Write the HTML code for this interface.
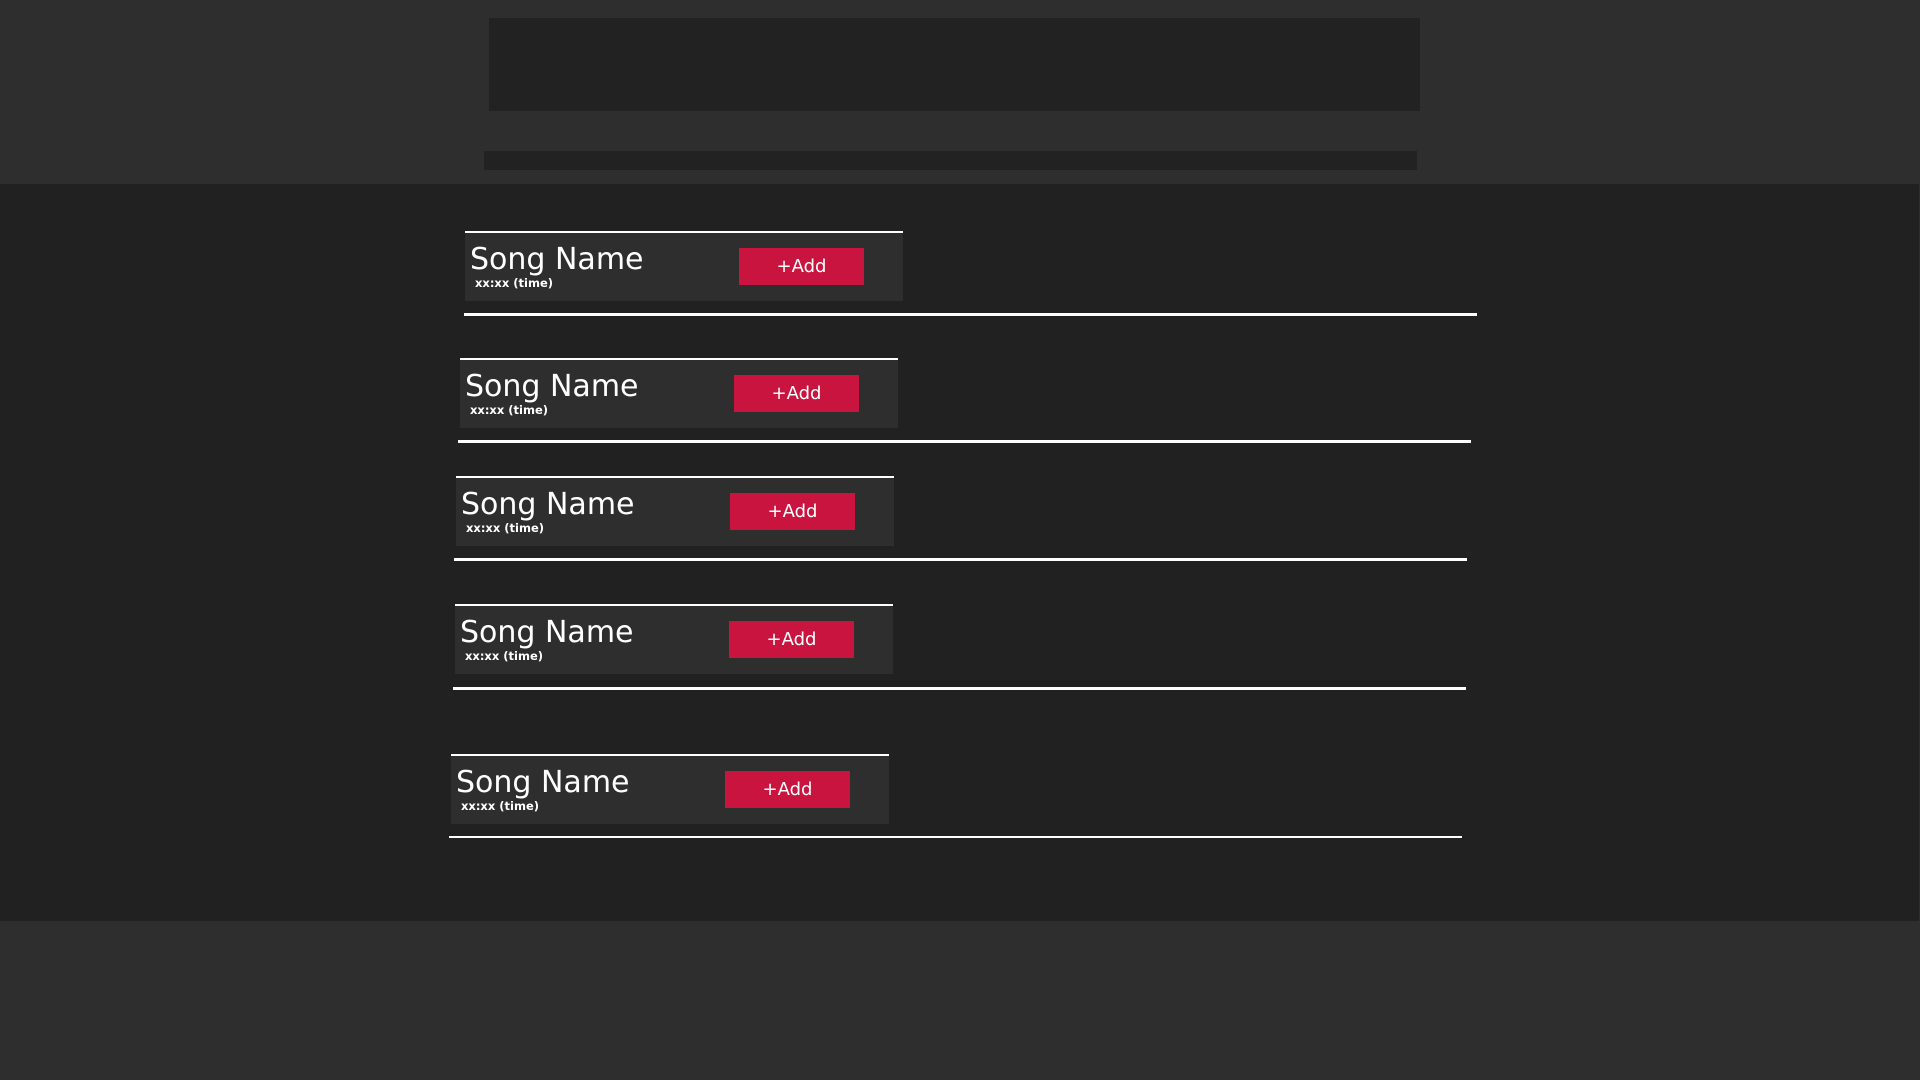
<!DOCTYPE html>
<html><head><meta charset="utf-8"><style>
html,body{margin:0;padding:0;width:1920px;height:1080px;overflow:hidden;background:#2e2e2e;font-family:"DejaVu Sans","Liberation Sans",sans-serif;}
.abs{position:absolute}
.main{left:0;top:184px;width:1919px;height:737px;background:#212121}
.box{position:absolute;width:438px;height:68px;background:#2e2e2e;border-top:2px solid #fff}
.title{position:absolute;left:5px;top:10px;color:#fff;font-size:30px;line-height:34px;white-space:nowrap}
.time{position:absolute;left:10px;top:43px;color:#fff;font-size:11.5px;font-weight:bold;line-height:14px;white-space:nowrap}
.btn{position:absolute;left:274px;top:15px;width:125px;height:37px;background:#c8143f;color:#fff;font-size:18px;line-height:37px;text-align:center}
.line{position:absolute;width:1013px;height:3px;background:#fff}
</style></head><body>
<div class="abs" style="left:489px;top:18px;width:931px;height:93px;background:#222"></div>
<div class="abs" style="left:484px;top:151px;width:933px;height:19px;background:#222"></div>
<div class="abs main"></div>

<div class="box" style="left:465px;top:231px"><div class="title">Song Name</div><div class="time">xx:xx (time)</div><div class="btn">+Add</div></div>
<div class="line" style="left:464px;top:313px"></div>

<div class="box" style="left:460px;top:358px"><div class="title">Song Name</div><div class="time">xx:xx (time)</div><div class="btn">+Add</div></div>
<div class="line" style="left:458px;top:440px"></div>

<div class="box" style="left:456px;top:476px"><div class="title">Song Name</div><div class="time">xx:xx (time)</div><div class="btn">+Add</div></div>
<div class="line" style="left:454px;top:558px"></div>

<div class="box" style="left:455px;top:604px"><div class="title">Song Name</div><div class="time">xx:xx (time)</div><div class="btn">+Add</div></div>
<div class="line" style="left:453px;top:687px"></div>

<div class="box" style="left:451px;top:754px"><div class="title">Song Name</div><div class="time">xx:xx (time)</div><div class="btn">+Add</div></div>
<div class="line" style="left:449px;top:836px;height:2px"></div>
</body></html>
